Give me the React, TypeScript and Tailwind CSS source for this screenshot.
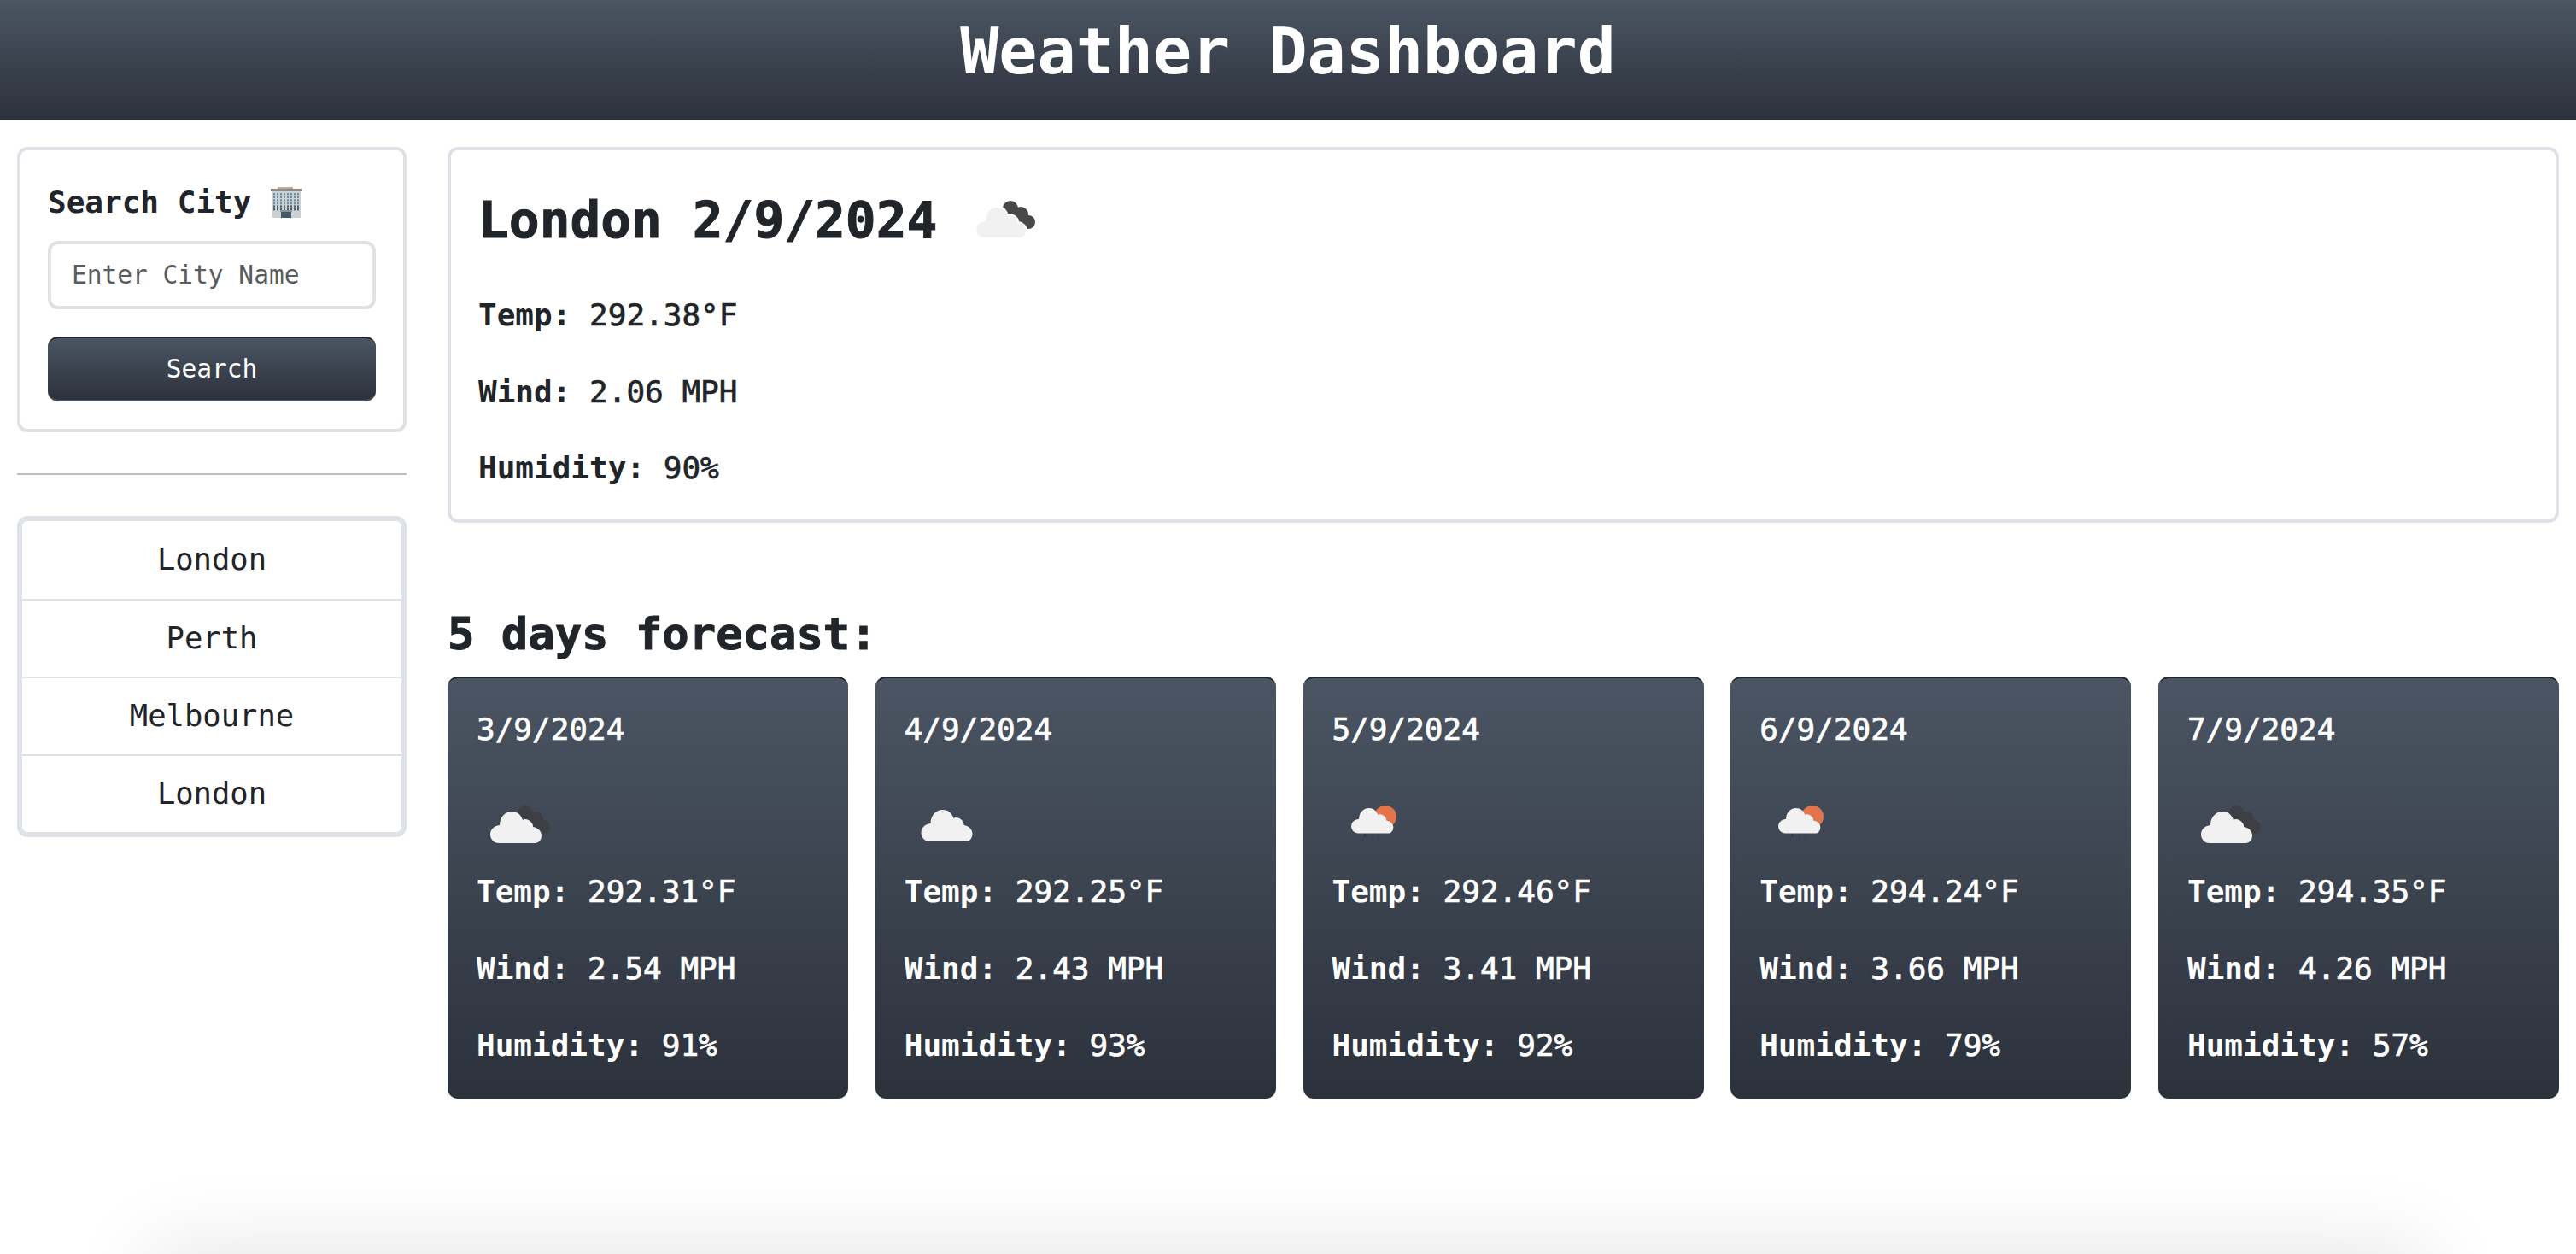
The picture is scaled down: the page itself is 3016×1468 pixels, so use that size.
import React from 'react'

const forecast = [
  { date: '3/9/2024', temp: '292.31', wind: '2.54', humidity: '91', icon: 'dark' },
  { date: '4/9/2024', temp: '292.25', wind: '2.43', humidity: '93', icon: 'plain' },
  { date: '5/9/2024', temp: '292.46', wind: '3.41', humidity: '92', icon: 'rain' },
  { date: '6/9/2024', temp: '294.24', wind: '3.66', humidity: '79', icon: 'rain' },
  { date: '7/9/2024', temp: '294.35', wind: '4.26', humidity: '57', icon: 'dark' },
]

const cities = ['London', 'Perth', 'Melbourne', 'London']

const cloud =
  'M26 72C20 72 16 67 16 62C16 56 20 52 27 51C27 42 33 35 41 35C48 35 52 39 54 45C56 43 62 44 65 49C66 50 66 52 66 53C72 54 76 58 76 63C76 68 73 72 68 72Z'

function WeatherIcon({ kind, shade = '#3d3f45', halo = false }: { kind: string; shade?: string; halo?: boolean }) {
  if (kind === 'rain') {
    return (
      <svg className="w-[100px] h-[100px] shrink-0" viewBox="0 0 100 100">
        <circle cx="62" cy="41" r="13" fill="#e2754c" />
        <g fill="#363940">
          <rect x="37" y="60" width="2.5" height="5" />
          <rect x="35" y="66" width="1.5" height="5" opacity="0.4" />
          <rect x="46" y="62" width="1.5" height="6" opacity="0.4" />
          <rect x="53" y="62" width="1.5" height="6" opacity="0.4" />
        </g>
        <path d={cloud} fill="#f1f1f1" transform="translate(9 3) scale(0.82 0.8)" />
      </svg>
    )
  }
  return (
    <svg className="w-[100px] h-[100px] shrink-0" viewBox="0 0 100 100">
      {kind === 'dark' && (
        <g fill={shade}>
          <circle cx="57" cy="37" r="9" />
          <circle cx="69" cy="44" r="9" />
          <circle cx="78" cy="53" r="8" />
        </g>
      )}
      <path
        d={cloud}
        fill="#f1f1f1"
        stroke={halo ? '#ffffff' : 'none'}
        strokeWidth={halo ? 2 : 0}
        transform={kind === 'plain' ? 'translate(3.5 -2)' : undefined}
      />
    </svg>
  )
}

function Building() {
  const windows = []
  for (let row = 0; row < 6; row++) {
    for (let col = 0; col < 8; col++) {
      windows.push(<rect key={row + '-' + col} x={3 + col * 4} y={7 + row * 3.6} width="2" height="2.4" fill={row < 4 ? '#6d8fa8' : '#4f5f6c'} />)
    }
  }
  return (
    <svg className="w-[36px] h-[36px] shrink-0" viewBox="0 0 36 36">
      <rect x="8" y="0" width="18" height="3" fill="#b5aea6" />
      <rect x="0" y="2" width="36" height="3" fill="#8f8880" />
      <rect x="1" y="5" width="34" height="31" fill="#ccd1d3" />
      {windows}
      <rect x="11" y="27" width="14" height="2" fill="#8f9498" />
      <rect x="12" y="29" width="12" height="7" fill="#40596b" />
    </svg>
  )
}

function Stat({ label, value }: { label: string; value: string }) {
  return (
    <p className="h-[44px] leading-[44px] text-[36px] whitespace-pre">
      <span className="font-bold">{label}</span>{' '}
      <span className="[-webkit-text-stroke:0.7px_currentColor]">{value}</span>
    </p>
  )
}

function ForecastCard({ item }: { item: (typeof forecast)[number] }) {
  return (
    <div className="w-[469px] h-[494px] shrink-0 rounded-xl border-t-2 border-[#1f2329] bg-gradient-to-b from-[#4b5563] to-[#2c323c] pt-[38px] pl-[34px] text-white">
      <p className="h-[44px] leading-[44px] text-[36px] [-webkit-text-stroke:0.7px_currentColor]">{item.date}</p>
      <div className="mt-[39px] mb-[7px]">
        <WeatherIcon kind={item.icon} />
      </div>
      <div className="flex flex-col gap-[46px]">
        <Stat label="Temp:" value={item.temp + '°F'} />
        <Stat label="Wind:" value={item.wind + ' MPH'} />
        <Stat label="Humidity:" value={item.humidity + '%'} />
      </div>
    </div>
  )
}

export default function App() {
  return (
    <div className="h-[1468px] overflow-hidden flex flex-col bg-white text-[#212529] font-['DejaVu_Sans_Mono',monospace]">
      <header className="h-[140px] shrink-0 flex items-center justify-center pb-[20px] bg-gradient-to-b from-[#4b5563] to-[#2c323c]">
        <h1 className="text-[75px] leading-[90px] font-bold text-white">Weather Dashboard</h1>
      </header>

      <div className="flex gap-[48px] px-[20px] pt-[32px]">
        <aside className="w-[456px] shrink-0">
          <div className="h-[334px] rounded-xl border-4 border-[#dee2e6] px-[32px] pt-[39px]">
            <div className="flex items-center gap-[23px] h-[44px]">
              <h2 className="text-[36px] leading-[44px] font-bold">Search City</h2>
              <Building />
            </div>
            <input
              placeholder="Enter City Name"
              className="mt-[23px] w-full h-[80px] rounded-xl border-4 border-[#dee2e6] px-[24px] text-[29.5px] outline-none placeholder:text-[#595c5f]"
            />
            <button className="mt-[32px] w-full h-[76px] rounded-xl border-t-2 border-[#212529] border-b-2 border-b-[#4b5563] bg-gradient-to-b from-[#4b5563] to-[#2c323c] text-[29.5px] text-white">
              Search
            </button>
          </div>

          <hr className="mt-[48px] border-t-2 border-[#bdbdbd]" />

          <div className="mt-[48px] rounded-xl border-4 border-[#dee2e6]">
            <ul className="rounded-lg border-2 border-[#dee2e6]">
              {cities.map((city, i) => (
                <li
                  key={i}
                  className="h-[91px] pb-[2px] flex items-center justify-center text-[35.5px] border-t-2 border-[#dee2e6] first:border-t-0"
                >
                  {city}
                </li>
              ))}
            </ul>
          </div>
        </aside>

        <main className="w-[2472px]">
          <section className="h-[440px] rounded-xl border-4 border-[#dee2e6] pl-[32px] pt-[31px]">
            <div className="flex items-center gap-[29px] h-[100px]">
              <h2 className="pt-[2px] text-[59.5px] leading-[72px] font-bold [-webkit-text-stroke:1px_currentColor]">London 2/9/2024</h2>
              <WeatherIcon kind="dark" shade="#48484a" halo />
            </div>
            <div className="mt-[40px] flex flex-col gap-[45.5px]">
              <Stat label="Temp:" value="292.38°F" />
              <Stat label="Wind:" value="2.06 MPH" />
              <Stat label="Humidity:" value="90%" />
            </div>
          </section>

          <h3 className="mt-[98px] h-[64px] leading-[64px] text-[52.2px] font-bold [-webkit-text-stroke:1px_currentColor]">5 days forecast:</h3>

          <div className="mt-[18px] flex justify-between">
            {forecast.map((item) => (
              <ForecastCard key={item.date} item={item} />
            ))}
          </div>
        </main>
      </div>

      {/* footer sits just under the fold, only its shadow shows */}
      <div className="mt-auto mx-[180px] h-[200px] -mb-[200px] shrink-0 shadow-[0_0_100px_4px_rgba(0,0,0,0.11)]" />
    </div>
  )
}
